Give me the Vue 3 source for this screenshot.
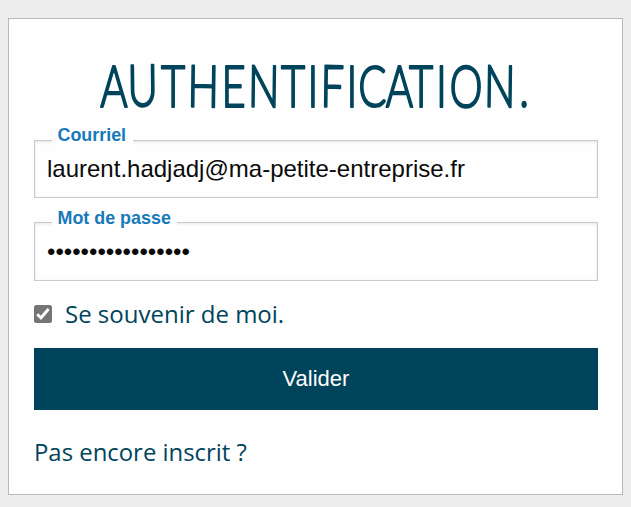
<script setup>
import { ref } from 'vue'

const email = ref('laurent.hadjadj@ma-petite-entreprise.fr')
const password = ref('motdepassesecret1')
const remember = ref(true)

// Letter centres of the narrow, hand-spaced title
const squeeze = 0.72
const centres = [80, 109, 139, 169, 199.5, 229.5, 259, 279, 298, 318, 338.5, 365.5, 387, 407.5, 431.5, 465.5, 490]
const titleX = centres.map((c) => (c / squeeze).toFixed(1)).join(' ')
</script>

<template>
  <main class="page">
    <form class="card" @submit.prevent>
      <h1 class="title">
        <svg class="title-art" viewBox="0 0 564 60" width="564" height="60">
          <text
            :x="titleX"
            y="52.5"
            rotate="0 -1 0 1 0 1 0 0 1 0 0 0 0 0 2 1 0"
            transform="scale(0.72 1)"
          >AUTHENTIFICATION.</text>
        </svg>
      </h1>
      <div class="field">
        <label class="label" for="email">Courriel</label>
        <input id="email" v-model="email" class="input" type="text" spellcheck="false" />
      </div>
      <div class="field second">
        <label class="label" for="password">Mot de passe</label>
        <input id="password" v-model="password" class="input" type="password" />
      </div>
      <label class="remember">
        <input v-model="remember" class="native" type="checkbox" />
        <svg class="check" viewBox="0 0 18 18" width="18" height="18">
          <rect width="18" height="18" rx="2.5" fill="#757575" />
          <path v-if="remember" d="M3.2 9.2 7 12.8 14.6 4" fill="none" stroke="#fff" stroke-width="2.9" />
        </svg>
        <span>Se souvenir de moi.</span>
      </label>
      <button class="submit" type="submit">Valider</button>
      <a class="signup">Pas encore inscrit ?</a>
    </form>
  </main>
</template>

<style>
body {
  margin: 0;
  background: #ededed;
}
</style>

<style scoped>
.page {
  box-sizing: border-box;
  height: 507px;
  padding: 18px 8px 12px;
  background: #ededed;
}
.card {
  box-sizing: border-box;
  display: flex;
  flex-direction: column;
  width: 615px;
  height: 477px;
  padding: 35px 24px 0 25px;
  border: 1px solid #b9b9b9;
  background: #fefefe;
  color: #00445b;
  font-family: 'Open Sans', sans-serif;
}
.title {
  height: 60px;
  margin: 0 0 26px;
}
.title-art {
  display: block;
  overflow: visible;
}
.title-art text {
  font-family: Lato, sans-serif;
  font-size: 58px;
  font-weight: 300;
  text-anchor: middle;
  fill: #00445b;
  stroke: #00445b;
  stroke-width: 2.1px;
  stroke-linejoin: round;
}
.field {
  position: relative;
  height: 58px;
  margin-bottom: 24px;
}
.second {
  height: 59px;
}
.label {
  position: absolute;
  left: 18px;
  top: -15px;
  padding: 0 6.5px 0 5.5px;
  background: #fefefe;
  color: #1779ba;
  font: bold 17.9px/20px 'Liberation Sans', Arial, sans-serif;
}
.second .label {
  top: -14px;
}
.input {
  box-sizing: border-box;
  display: block;
  width: 100%;
  height: 100%;
  padding: 0 12px;
  border: 1px solid #cacaca;
  border-radius: 0;
  outline: none;
  background: #fefefe;
  box-shadow: inset 0 1px 3px rgba(10, 10, 10, 0.1);
  color: #0a0a0a;
  font: 24px 'Liberation Sans', Arial, sans-serif;
}
.remember {
  position: relative;
  display: flex;
  align-items: center;
  height: 34px;
  margin-top: -8px;
  font-size: 24px;
  line-height: 34px;
}
.native {
  position: absolute;
  opacity: 0;
}
.check {
  margin-right: 13px;
}
.submit {
  height: 62px;
  flex: none;
  margin: 17px 0 0;
  padding: 0;
  border: 0;
  background: #00445b;
  color: #fefefe;
  font: 22px 'Liberation Sans', Arial, sans-serif;
}
.signup {
  margin-top: 25px;
  font-size: 23.9px;
  line-height: 34px;
}
</style>
